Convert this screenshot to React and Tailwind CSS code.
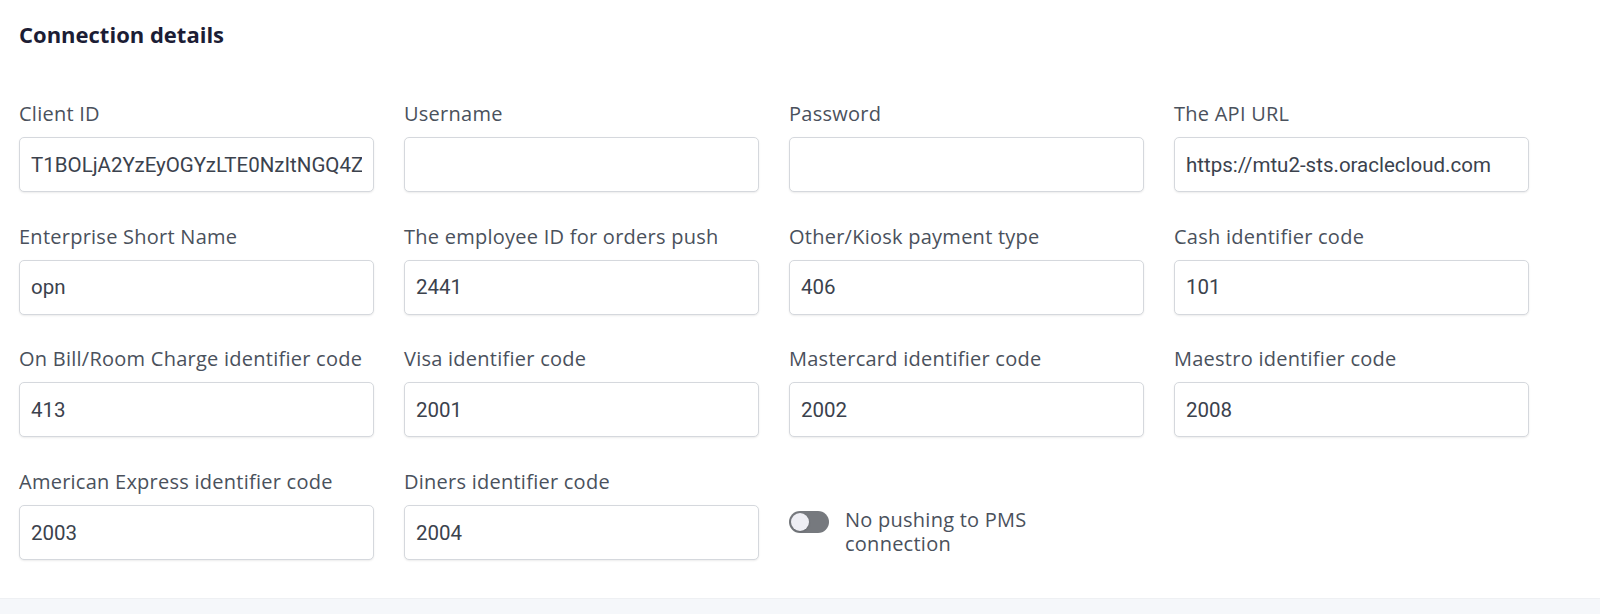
const fields = [
  { label: "Client ID", value: "T1BOLjA2YzEyOGYzLTE0NzItNGQ4ZS1hMjE3LTU2YzE0OTk3" },
  { label: "Username", value: "" },
  { label: "Password", value: "" },
  { label: "The API URL", value: "https://mtu2-sts.oraclecloud.com" },
  { label: "Enterprise Short Name", value: "opn" },
  { label: "The employee ID for orders push", value: "2441" },
  { label: "Other/Kiosk payment type", value: "406" },
  { label: "Cash identifier code", value: "101" },
  { label: "On Bill/Room Charge identifier code", value: "413" },
  { label: "Visa identifier code", value: "2001" },
  { label: "Mastercard identifier code", value: "2002" },
  { label: "Maestro identifier code", value: "2008" },
  { label: "American Express identifier code", value: "2003" },
  { label: "Diners identifier code", value: "2004" },
];

function Field({ label, value }) {
  return (
    <div className="flex flex-col">
      <label className="text-[20px] tracking-[0.25px] leading-6 text-[#4a515c] mb-[11px] whitespace-nowrap">{label}</label>
      <input
        readOnly
        value={value}
        className="h-[55px] w-full rounded-[5px] border border-[#d5d8dd] bg-white px-[11px] text-[20.5px] text-[#3b424d] shadow-[0_1px_2px_rgba(0,0,0,0.08)] outline-none"
        style={{ fontFamily: "Roboto, sans-serif" }}
      />
    </div>
  );
}

export default function App() {
  return (
    <div className="min-h-screen bg-white flex flex-col" style={{ fontFamily: "'Open Sans', sans-serif" }}>
      <div className="pl-[19px] pt-5 pb-[38px]">
        <h2 className="text-[22px] leading-7 font-bold text-[#1c1d35] mb-[54px]">Connection details</h2>
        <div className="grid grid-cols-4 w-[1510px] gap-x-[30px] gap-y-[32.7px]">
          {fields.map((f) => (
            <Field key={f.label} label={f.label} value={f.value} />
          ))}
          <div className="flex items-start gap-4 pt-[38px]">
            <div className="relative mt-[3px] h-[22px] w-[40px] shrink-0 rounded-full bg-[#76797e]">
              <div className="absolute left-[2px] top-[2px] h-[18px] w-[18px] rounded-full bg-[#eeeef4] shadow" />
            </div>
            <span className="text-[20px] tracking-[0.25px] leading-6 text-[#4a515c]">
              No pushing to PMS
              <br />
              connection
            </span>
          </div>
        </div>
      </div>
      <div className="flex-1 border-t border-[#eef0f3] bg-[#f5f7fa]" />
    </div>
  );
}
